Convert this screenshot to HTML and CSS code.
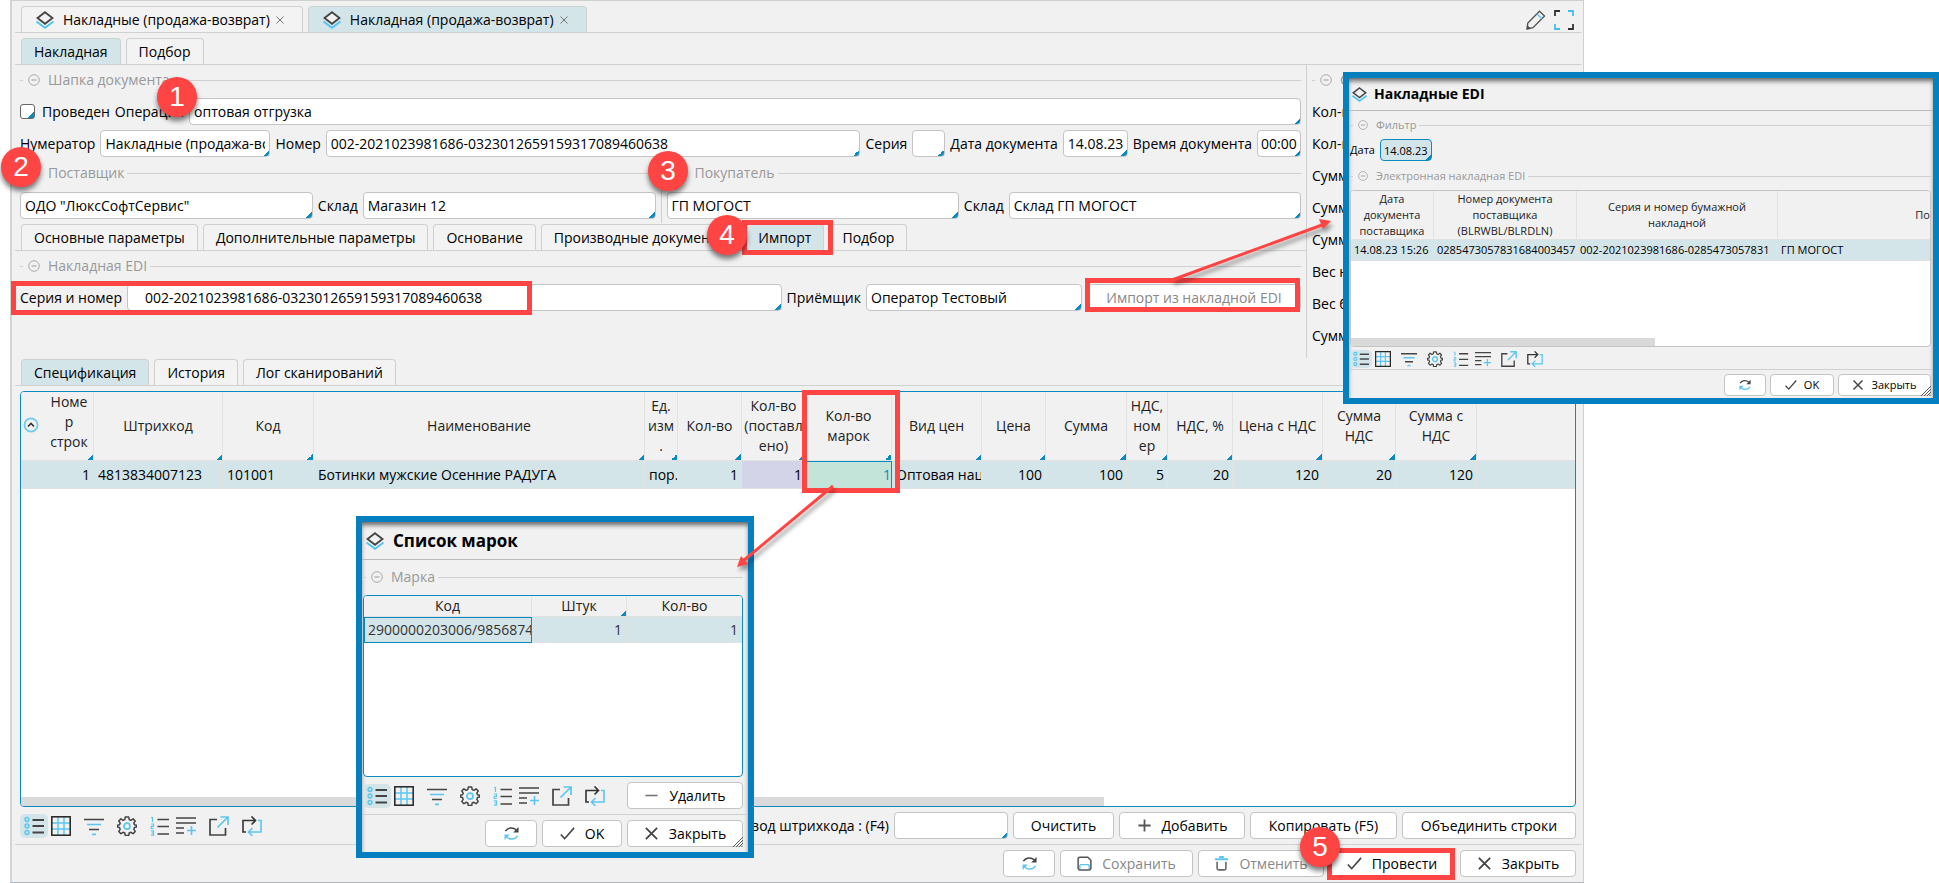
FILE: index.html
```
<!DOCTYPE html>
<html lang="ru">
<head>
<meta charset="utf-8">
<title>Накладная (продажа-возврат)</title>
<link rel="stylesheet" href="styles.css">
</head>
<body>
<svg class="sprite" aria-hidden="true">
  <symbol id="layers" viewBox="0 0 20 18"><path d="M1.5 10.5 10 16.8l8.500-6.300" fill="none" stroke="#55c4ef" stroke-width="2"/><path d="M10 1.200 17.500 7 10 12.800 2.500 7z" fill="#f1f1f1" stroke="#444" stroke-width="1.800"/></symbol>
  <symbol id="list" viewBox="0 0 20 20"><g fill="none" stroke="#5cc6f0" stroke-width="1.500"><circle cx="3" cy="3.500" r="1.900"/><circle cx="3" cy="10" r="1.900"/><circle cx="3" cy="16.500" r="1.900"/></g><path d="M8.500 4H20M8.500 10H20M8.500 16.500H20" stroke="#444" stroke-width="1.800"/></symbol>
  <symbol id="grid" viewBox="0 0 20 20"><path d="M7 1v18M13 1v18M1 7h18M1 13h18" stroke="#5cc6f0" stroke-width="1.500"/><rect x=".8" y=".8" width="18.400" height="18.400" fill="none" stroke="#222" stroke-width="1.500"/></symbol>
  <symbol id="filter" viewBox="0 0 20 20"><path d="M0 3.500h20M5 13.500h10" stroke="#444" stroke-width="1.700"/><path d="M3 8.500h14M8 18.300h4" stroke="#5cc6f0" stroke-width="1.700"/></symbol>
  <symbol id="gear" viewBox="0 0 20 20"><path d="M8.300 1h3.400l.5 2.600 1.700.7 2.200-1.500 2.100 2.200-1.400 2.100.7 1.700 2 .4v1.900l-2 .4-.7 1.900 1.400 2-2.100 2.300-2.200-1.400-1.700.7-.5 2.500H8.300l-.5-2.500-1.700-.7-2.200 1.400-2.100-2.300 1.400-2-.7-1.900-2-.4V9.200l2-.4.7-1.700L1.800 5l2.100-2.200 2.200 1.500 1.700-.7z" fill="none" stroke="#444" stroke-width="1.500" stroke-linejoin="round"/><circle cx="10" cy="10.200" r="3" fill="none" stroke="#5cc6f0" stroke-width="1.700"/></symbol>
  <symbol id="numbered" viewBox="0 0 20 20"><path d="M1 1.500h1.500V6M1 8h2.500v2.300H1.200v2.200h2.500M1 14.800h2.500v4.400H1M1.500 17h2" fill="none" stroke="#5cc6f0" stroke-width="1.200"/><path d="M7.500 3.500H19M7.500 10.500H19M7.500 18H19" stroke="#444" stroke-width="1.700"/></symbol>
  <symbol id="addlist" viewBox="0 0 20 20"><path d="M0 2h20M0 7h20M0 12h8M0 17h8" stroke="#444" stroke-width="1.700"/><path d="M11 14.500h9M15.500 10v9" stroke="#5cc6f0" stroke-width="1.700"/></symbol>
  <symbol id="export" viewBox="0 0 20 20"><path d="M8 3.500H1v15.500h15.500V12" fill="none" stroke="#444" stroke-width="1.700"/><path d="M8.500 11.500 19 1M11.500 1H19v8" fill="none" stroke="#5cc6f0" stroke-width="1.700"/></symbol>
  <symbol id="loop" viewBox="0 0 20 20"><path d="M4 16H1V4.500h12M9.500.5l4 4-4 4" fill="none" stroke="#333" stroke-width="1.600"/><path d="M16 4.500h3V16H7M10.500 12l-4 4 4 4" fill="none" stroke="#5cc6f0" stroke-width="1.600"/></symbol>
  <symbol id="refresh" viewBox="0 0 16 16"><path d="M1.500 5.500C4 1.500 9.500 1 13 4" fill="none" stroke="#444" stroke-width="1.600"/><path d="M15.500 1v6H9.800z" fill="#444"/><path d="M14.500 10.500C12 14.500 6.500 15 3 12" fill="none" stroke="#5cc6f0" stroke-width="1.600"/><path d="M.5 15V9h5.700z" fill="#5cc6f0"/></symbol>
  <symbol id="check" viewBox="0 0 16 16"><path d="M.8 9 5 13.500 15 2" fill="none" stroke="#444" stroke-width="1.700"/></symbol>
  <symbol id="cross" viewBox="0 0 16 16"><path d="M2 2l12 12M14 2 2 14" stroke="#444" stroke-width="1.900"/></symbol>
  <symbol id="thin-cross" viewBox="0 0 10 10"><path d="M1.500 1.500l7 7M8.500 1.500l-7 7" stroke="#777"/></symbol>
  <symbol id="plus" viewBox="0 0 16 16"><path d="M1.500 8h13M8 1.500v13" stroke="#555" stroke-width="1.900"/></symbol>
  <symbol id="minus" viewBox="0 0 16 16"><path d="M1.500 8h13" stroke="#777" stroke-width="1.700"/></symbol>
  <symbol id="save" viewBox="0 0 16 16"><path d="M1.200 3c0-1 .8-1.800 1.800-1.800h8.500l3.300 3.300V13c0 1-.8 1.800-1.800 1.800H3c-1 0-1.800-.8-1.800-1.800z" fill="none" stroke="#555" stroke-width="1.600"/><path d="M3 9.200h10M3 13.800V9.500M13 13.800V9.500" stroke="#5cc6f0" stroke-width="1.500"/></symbol>
  <symbol id="trash" viewBox="0 0 16 16"><path d="M1 3.500h14M5.500 1h5" stroke="#5cc6f0" stroke-width="2.200"/><path d="M3.300 6v7c0 1 .7 1.800 1.700 1.800h6c1 0 1.700-.8 1.700-1.800V6" fill="none" stroke="#666" stroke-width="1.700"/></symbol>
  <symbol id="pencil" viewBox="0 0 20 20"><path d="M1 19l.8-6L13.500 1.300l5 4.700L7 17.700z" fill="none" stroke="#555" stroke-width="1.400"/><path d="M11 4l5 4.700" stroke="#5cc6f0" stroke-width="1.500"/><path d="M1 19l.6-3.500 3 2.800z" fill="#444"/></symbol>
  <symbol id="expand" viewBox="0 0 20 20"><path d="M1 6V1h5M19 14v5h-5" fill="none" stroke="#333" stroke-width="1.800"/><path d="M14 1h5v5M6 19H1v-5" fill="none" stroke="#45bdec" stroke-width="1.800"/></symbol>
  <symbol id="collapse" viewBox="0 0 12 12"><circle cx="6" cy="6" r="5.300" fill="none" stroke="#aaa"/><path d="M3.500 6h5" stroke="#999"/></symbol>
  <symbol id="up" viewBox="0 0 16 16"><circle cx="8" cy="8" r="6.600" fill="#f1f1f1" stroke="#6fcaf0" stroke-width="1.700"/><path d="M5 9.500 8 6.500l3 3" fill="none" stroke="#333" stroke-width="1.600"/></symbol>
  <symbol id="grip" viewBox="0 0 10 10"><path d="M0 10 10 0M3 10l7-7M6 10l4-4M8.500 10 10 8.500" stroke="#555"/></symbol>
</svg>

<main class="window">
  <nav class="tabs tabs-docs">
    <button class="tab"><svg class="ic-layers"><use href="#layers"/></svg>Накладные (продажа-возврат)<svg class="close"><use href="#thin-cross"/></svg></button>
    <button class="tab active"><svg class="ic-layers"><use href="#layers"/></svg>Накладная (продажа-возврат)<svg class="close"><use href="#thin-cross"/></svg></button>
    <div class="window-tools"><svg class="ic20"><use href="#pencil"/></svg><svg class="ic20"><use href="#expand"/></svg></div>
  </nav>
  <nav class="tabs">
    <button class="tab active">Накладная</button>
    <button class="tab">Подбор</button>
  </nav>

  <section class="header">
    <div class="header-main">
      <div class="legend"><svg><use href="#collapse"/></svg>Шапка документа</div>
      <div class="row inset">
        <label class="check"><input type="checkbox">Проведен</label>
        <label for="operation">Операция</label><input id="operation" class="grow" value="оптовая отгрузка">
      </div>
      <div class="row inset">
        <label for="numerator">Нумератор</label><input id="numerator" class="w-num" value="Накладные (продажа-возврат)">
        <label for="number">Номер</label><input id="number" class="grow" value="002-2021023981686-0323012659159317089460638">
        <label for="series">Серия</label><input id="series" class="w-ser">
        <label for="date">Дата документа</label><input id="date" class="w-date" value="14.08.23">
        <label for="time">Время документа</label><input id="time" class="w-time" value="00:00">
      </div>
      <div class="parties inset">
        <div class="party">
          <div class="legend spaced"><svg><use href="#collapse"/></svg>Поставщик</div>
          <div class="row"><input class="grow" aria-label="Поставщик" value="ОДО &quot;ЛюксСофтСервис&quot;"><label for="stock1">Склад</label><input id="stock1" class="grow" value="Магазин 12"></div>
        </div>
        <div class="party">
          <div class="legend spaced"><svg><use href="#collapse"/></svg>Покупатель</div>
          <div class="row"><input class="grow" aria-label="Покупатель" value="ГП МОГОСТ"><label for="stock2">Склад</label><input id="stock2" class="grow" value="Склад ГП МОГОСТ"></div>
        </div>
      </div>
      <nav class="tabs tabs-inner">
        <button class="tab">Основные параметры</button>
        <button class="tab">Дополнительные параметры</button>
        <button class="tab">Основание</button>
        <button class="tab">Производные документы</button>
        <button class="tab active">Импорт</button>
        <button class="tab">Подбор</button>
      </nav>
      <div class="legend"><svg><use href="#collapse"/></svg>Накладная EDI</div>
      <div class="row inset">
        <label for="edi">Серия и номер</label><input id="edi" class="grow indented" value="002-2021023981686-0323012659159317089460638">
        <label for="receiver">Приёмщик</label><input id="receiver" class="w-recv" value="Оператор Тестовый">
        <button class="btn muted w-import">Импорт из накладной EDI</button>
      </div>
    </div>
    <aside class="totals">
      <div class="legend"><svg><use href="#collapse"/></svg>Сумма</div>
      <div>Кол-во</div><div>Кол-во</div><div>Сумма</div><div>Сумма</div><div>Сумма</div><div>Вес нетто</div><div>Вес брутто</div><div>Сумма</div>
    </aside>
  </section>

  <nav class="tabs tabs-spec">
    <button class="tab active">Спецификация</button>
    <button class="tab">История</button>
    <button class="tab">Лог сканирований</button>
  </nav>
  <div class="grid-box">
    <table class="grid spec">
      <colgroup><col class="c73"><col class="c129"><col class="c91"><col class="c331"><col class="c33"><col class="c64"><col class="c64"><col class="c86"><col class="c90"><col class="c64"><col class="c81"><col class="c41"><col class="c65"><col class="c90"><col class="c73"><col class="c81"><col></colgroup>
      <thead><tr>
        <th class="first"><div class="sorted"><svg class="ic16"><use href="#up"/></svg><span>Номе<br>р<br>строк</span></div></th><th>Штрихкод</th><th>Код</th><th>Наименование</th><th>Ед.<br>изм<br>.</th><th>Кол-во</th><th>Кол-во<br>(поставл<br>ено)</th><th>Кол-во<br>марок</th><th>Вид цен</th><th>Цена</th><th>Сумма</th><th>НДС,<br>ном<br>ер</th><th>НДС, %</th><th>Цена с НДС</th><th>Сумма<br>НДС</th><th>Сумма с<br>НДС</th><th class="blank"></th>
      </tr></thead>
      <tbody><tr>
        <td class="num">1</td><td>4813834007123</td><td>101001</td><td>Ботинки мужские Осенние РАДУГА</td><td>пор.</td><td class="num">1</td><td class="num lilac">1</td><td class="num focus">1</td><td>Оптовая нац</td><td class="num">100</td><td class="num">100</td><td class="num">5</td><td class="num">20</td><td class="num">120</td><td class="num">20</td><td class="num">120</td><td></td>
      </tr></tbody>
    </table>
    <div class="scroll"></div>
  </div>
  <div class="bar">
    <div class="icons"><span class="on"><svg><use href="#list"/></svg></span><svg><use href="#grid"/></svg><svg class="far"><use href="#filter"/></svg><svg class="far"><use href="#gear"/></svg><svg class="far"><use href="#numbered"/></svg><svg class="near"><use href="#addlist"/></svg><svg class="far"><use href="#export"/></svg><svg class="far"><use href="#loop"/></svg></div>
    <label for="barcode">Ввод штрихкода : (F4)</label><input id="barcode" class="w-bar">
    <button class="btn w-clear">Очистить</button>
    <button class="btn w-add"><svg><use href="#plus"/></svg>Добавить</button>
    <button class="btn w-copy">Копировать (F5)</button>
    <button class="btn w-merge">Объединить строки</button>
  </div>
  <footer class="bar foot">
    <button class="btn w-ref" aria-label="Обновить"><svg><use href="#refresh"/></svg></button>
    <button class="btn muted w-save"><svg><use href="#save"/></svg>Сохранить</button>
    <button class="btn muted w-add"><svg><use href="#trash"/></svg>Отменить</button>
    <button class="btn w-add"><svg><use href="#check"/></svg>Провести</button>
    <button class="btn w-close"><svg><use href="#cross"/></svg>Закрыть</button>
  </footer>
</main>

<section class="dialog marks">
  <h2><svg class="ic-layers"><use href="#layers"/></svg>Список марок</h2>
  <div class="dialog-body">
    <div class="legend"><svg><use href="#collapse"/></svg>Марка</div>
    <div class="grid-box">
      <table class="grid">
        <colgroup><col class="c168"><col class="c95"><col></colgroup>
        <thead><tr><th class="plain">Код</th><th>Штук</th><th class="plain">Кол-во</th></tr></thead>
        <tbody><tr><td class="outlined">2900000203006/9856874</td><td class="num">1</td><td class="num">1</td></tr></tbody>
      </table>
    </div>
    <div class="bar">
      <div class="icons"><span class="on"><svg><use href="#list"/></svg></span><svg><use href="#grid"/></svg><svg class="far"><use href="#filter"/></svg><svg class="far"><use href="#gear"/></svg><svg class="far"><use href="#numbered"/></svg><svg class="near"><use href="#addlist"/></svg><svg class="far"><use href="#export"/></svg><svg class="far"><use href="#loop"/></svg></div>
      <button class="btn w-close"><svg><use href="#minus"/></svg>Удалить</button>
    </div>
  </div>
  <footer class="bar foot">
    <button class="btn w-ref" aria-label="Обновить"><svg><use href="#refresh"/></svg></button>
    <button class="btn w-ok"><svg><use href="#check"/></svg>OK</button>
    <button class="btn w-close"><svg><use href="#cross"/></svg>Закрыть</button>
  </footer>
  <svg class="grip"><use href="#grip"/></svg>
</section>

<section class="dialog edi">
  <h2><svg class="ic-layers"><use href="#layers"/></svg>Накладные EDI</h2>
  <div class="dialog-body">
    <div class="legend"><svg><use href="#collapse"/></svg>Фильтр</div>
    <div class="row"><label for="fdate">Дата</label><input id="fdate" class="w-fdate" value="14.08.23"></div>
    <div class="legend"><svg><use href="#collapse"/></svg>Электронная накладная EDI</div>
    <div class="grid-box">
      <table class="grid">
        <colgroup><col class="c83"><col class="c143"><col class="c201"><col></colgroup>
        <thead><tr><th class="plain">Дата<br>документа<br>поставщика</th><th class="plain">Номер документа<br>поставщика<br>(BLRWBL/BLRDLN)</th><th class="plain">Серия и номер бумажной<br>накладной</th><th class="plain cut">По</th></tr></thead>
        <tbody><tr><td>14.08.23 15:26</td><td>0285473057831684003457</td><td>002-2021023981686-0285473057831</td><td>ГП МОГОСТ</td></tr></tbody>
      </table>
      <div class="scroll"></div>
    </div>
    <div class="bar">
      <div class="icons"><span class="on"><svg><use href="#list"/></svg></span><svg><use href="#grid"/></svg><svg class="far"><use href="#filter"/></svg><svg class="far"><use href="#gear"/></svg><svg class="far"><use href="#numbered"/></svg><svg class="near"><use href="#addlist"/></svg><svg class="far"><use href="#export"/></svg><svg class="far"><use href="#loop"/></svg></div>
    </div>
  </div>
  <footer class="bar foot">
    <button class="btn w-ref" aria-label="Обновить"><svg><use href="#refresh"/></svg></button>
    <button class="btn w-ok"><svg><use href="#check"/></svg>OK</button>
    <button class="btn w-close"><svg><use href="#cross"/></svg>Закрыть</button>
  </footer>
  <svg class="grip"><use href="#grip"/></svg>
</section>

<div class="frame frame-series"></div>
<div class="frame frame-tab"></div>
<div class="frame frame-import"></div>
<div class="frame frame-marks"></div>
<div class="frame frame-post"></div>
<svg class="arrows" aria-hidden="true">
  <path class="shaft" d="M1172 280 1322 225"/><path class="head" d="M1331 221l-8 8-4-10z"/>
  <path class="shaft" d="M833 486 743 561"/><path class="head" d="M737 567l4-11 7 8z"/>
</svg>
<div class="badge b1">1</div>
<div class="badge b2">2</div>
<div class="badge b3">3</div>
<div class="badge b4">4</div>
<div class="badge b5">5</div>
</body>
</html>
```
FILE: styles.css
```
* { box-sizing: border-box; }
body {
  margin: 0;
  position: relative;
  min-height: 100vh;
  background: #fff;
  color: #000;
  font: 14px/20px "Open Sans", "Noto Sans", sans-serif;
}
button, input { font: inherit; color: inherit; }
svg { display: block; flex: none; }
.sprite { position: absolute; width: 0; height: 0; }
.ic-layers { width: 20px; height: 18px; }
.ic20 { width: 20px; height: 20px; }
.ic16 { width: 16px; height: 16px; }

.window {
  display: flex;
  flex-direction: column;
  min-height: 100vh;
  margin: 0 355px 0 10px;
  padding: 0 2px 0 3px;
  background: #f1f1f1;
  border: 1px solid #d0d0d0;
  border-left: 2px solid #d4d4d4;
  border-bottom-color: #aeb6be;
}

.tabs {
  display: flex;
  gap: 5px;
  padding: 5px 6px 0;
  border-bottom: 1px solid #d0d0d0;
}
.tab {
  display: flex;
  align-items: center;
  height: 26px;
  padding: 0 12px;
  border: 1px solid #d0d0d0;
  border-bottom: 0;
  border-radius: 4px 4px 0 0;
  background: #f3f3f3;
  white-space: nowrap;
}
.tab.active { background: #d3e5e9; }
.tabs-docs .tab { padding: 0 17px 0 13px; }
.tabs-docs .ic-layers { margin-right: 8px; }
.close { width: 10px; height: 10px; margin-left: 5px; }
.window-tools { display: flex; gap: 8px; margin: 4px 1px 0 auto; }

.header { display: grid; grid-template-columns: 1fr 274px; min-height: 293px; }
.header-main { border-right: 1px solid #d0d0d0; }
.inset { padding: 0 5px; }
.legend {
  display: flex;
  align-items: center;
  gap: 8px;
  height: 30px;
  margin: 0 5px 3px;
  color: #999;
  white-space: nowrap;
}
.legend svg { width: 12px; height: 12px; }
.legend::before { content: ""; width: 3px; height: 1px; margin-right: -3px; background: #d0d0d0; }
.legend::after { content: ""; flex: 1; height: 1px; margin-left: -5px; background: #d0d0d0; }
.legend.spaced { margin: -4px 0 4px; }

.row { display: flex; align-items: center; gap: 5px; margin-bottom: 5px; white-space: nowrap; }
.check { display: flex; align-items: center; gap: 7px; }
.check input {
  appearance: none;
  width: 15px;
  height: 15px;
  margin: 0;
  padding: 0;
  border: 1px solid #666;
  border-radius: 3px;
}
input {
  min-width: 0;
  height: 27px;
  padding: 0 4px;
  border: 1px solid #c4c4c4;
  border-radius: 4px;
  background: linear-gradient(135deg, transparent 50%, #0a8abf 50%) right bottom / 6px 6px no-repeat #fff;
}
.grow { flex: 1 1 0; }
.indented { padding-left: 17px; }
.w-num { width: 170px; }
.w-ser { width: 33px; }
.w-date { width: 65px; }
.w-time { width: 44px; padding: 0 3px; }
.w-recv { width: 216px; }
.w-bar { width: 114px; }
.parties { display: grid; grid-template-columns: 1fr 1fr; }
.party + .party { border-left: 1px solid #d0d0d0; padding-left: 5px; }
.party:first-child { padding-right: 5px; }
.party .row { margin-bottom: 4px; }
.tabs-inner { padding-top: 1px; }
.totals { padding-left: 5px; white-space: nowrap; overflow: hidden; }
.totals .legend { margin: 0 0 1px; }
.totals > div:not(.legend) { height: 32px; line-height: 32px; }
.tabs-spec { padding-top: 1px; }

.btn {
  display: flex;
  align-items: center;
  justify-content: center;
  gap: 10px;
  height: 27px;
  padding: 0;
  border: 1px solid #c4c4c4;
  border-radius: 4px;
  background: #fff;
  white-space: nowrap;
}
.btn svg { width: 15px; height: 15px; }
.btn.muted { color: #888; }
.w-import { width: 214px; }
.w-clear { width: 101px; }
.w-add { width: 126px; }
.w-copy { width: 147px; }
.w-merge { width: 174px; }
.w-ref { width: 52px; }
.w-save { width: 133px; }
.w-ok { width: 80px; }
.w-close { width: 116px; }

.grid-box {
  flex: 1;
  display: flex;
  flex-direction: column;
  justify-content: space-between;
  margin: 5px 5px 0;
  border: 1px solid #0a8abf;
  border-radius: 4px;
  background: #fff;
  overflow: hidden;
}
.grid { width: 100%; border-collapse: separate; border-spacing: 0; table-layout: fixed; }
.grid th, .grid td {
  overflow: hidden;
  white-space: nowrap;
  font-weight: normal;
  border-right: 1px solid #e2e2e2;
  border-bottom: 1px solid #e2e2e2;
}
.grid th:last-child, .grid td:last-child { border-right: 0; }
.grid th {
  height: 69px;
  padding: 0;
  color: #222;
  background: linear-gradient(135deg, transparent 50%, #0a8abf 50%) right bottom / 6px 6px no-repeat #f1f1f1;
}
.grid th.plain, .grid th.blank { background: #f1f1f1; }
.grid th.first { padding-bottom: 8px; }
.sorted { display: flex; align-items: center; gap: 6px; padding-left: 2px; }
.sorted svg { margin-top: 5px; }
.sorted span { flex: 1; }
.grid td { height: 28px; padding: 0 3px 0 4px; background: #d3e5e9; }
.grid .num { text-align: right; }
.spec .lilac { background: #d3d4e8; }
.spec .focus { background: #c3e5d9; color: #0a8abf; border: 1px solid #0a8abf; padding-right: 0; }
.scroll { width: 1083px; height: 9px; background: #dadada; }
.c33 { width: 33px; } .c41 { width: 41px; } .c64 { width: 64px; } .c65 { width: 65px; }
.c73 { width: 73px; } .c81 { width: 81px; } .c83 { width: 83px; } .c86 { width: 86px; }
.c90 { width: 90px; } .c91 { width: 91px; } .c95 { width: 95px; } .c129 { width: 129px; }
.c143 { width: 143px; } .c168 { width: 168px; } .c201 { width: 201px; } .c331 { width: 331px; }

.bar { display: flex; align-items: center; justify-content: flex-end; gap: 5px; padding: 5px; white-space: nowrap; }
.foot { border-top: 1px solid #d0d0d0; }
.icons { display: flex; align-items: center; gap: 3px; margin-right: auto; }
.icons svg { width: 20px; height: 20px; }
.icons .on { padding: 2px 4px; border-radius: 5px; background: #d3e5e9; }
.icons .far { margin-left: 10px; }
.icons .near { margin-left: 3px; }

.dialog {
  position: absolute;
  display: flex;
  flex-direction: column;
  border: 6px solid #0380bd;
  background: #f1f1f1;
  box-shadow: inset 0 4px 5px -1px #666;
}
.dialog h2 {
  display: flex;
  align-items: center;
  gap: 8px;
  height: 38px;
  margin: 0;
  padding-left: 3px;
  border-bottom: 1px solid #bbb;
  font-size: 17px;
}
.dialog-body { flex: 1; display: flex; flex-direction: column; }
.dialog .legend { margin: 2px 5px 3px 1px; }
.dialog .grid-box { margin: 0 5px 0 1px; }
.dialog .bar { padding: 5px 5px 5px 1px; }
.dialog .grip { position: absolute; right: 5px; bottom: 5px; width: 10px; height: 10px; }
.marks { left: 356px; top: 516px; width: 398px; height: 342px; }
.marks .grid th { height: 21px; }
.marks .grid td { height: 26px; color: #333; }
.marks .icons .on { padding: 2px 4px; }
.marks .grid .num { padding-right: 4px; }
.marks .grid .outlined { border: 1px solid #0a8abf; padding-left: 3px; }

.edi { right: 0; top: 72px; width: 596px; height: 332px; font-size: 11px; line-height: 16px; }
.edi h2 { height: 33px; gap: 6px; padding-left: 2px; font-size: 14px; }
.edi .ic-layers { width: 17px; height: 15px; }
.edi .legend { height: 26px; margin: 1px 2px 1px 1px; }
.edi .legend svg { width: 10px; height: 10px; }
.edi .row { margin-bottom: 1px; gap: 5px; padding-left: 1px; }
.edi .w-fdate { width: 52px; height: 22px; padding: 0 3px; border-color: #0a8abf; background-color: #d3e5e9; }
.edi .grid-box { margin: 0 2px 0 1px; border-color: #c4c4c4; }
.edi .grid th { height: 48px; }
.edi .grid th.cut { text-align: right; }
.edi .grid td { height: 21px; padding: 0 0 0 3px; }
.edi .scroll { width: 304px; height: 8px; }
.edi .bar { padding: 3px 2px 1px 1px; gap: 4px; }
.edi .foot { padding: 4px 2px 2px; }
.edi .icons svg { width: 16px; height: 16px; }
.edi .icons .on { padding: 1px 3px; }
.edi .icons .far { margin-left: 7px; }
.edi .btn { height: 22px; gap: 7px; }
.edi .btn svg { width: 12px; height: 12px; }
.edi .w-ref { width: 42px; }
.edi .w-ok { width: 64px; }
.edi .w-close { width: 93px; }
.edi .grip { right: 2px; bottom: 2px; }

.frame { position: absolute; border: 5px solid #ff4444; pointer-events: none; }
.frame-series { left: 11px; top: 281px; width: 521px; height: 34px; }
.frame-tab { left: 742px; top: 220px; width: 91px; height: 35px; }
.frame-import { left: 1085px; top: 278px; width: 215px; height: 34px; }
.frame-marks { left: 802px; top: 390px; width: 98px; height: 103px; }
.frame-post { left: 1327px; top: 848px; width: 128px; height: 32px; }
.arrows {
  position: absolute;
  inset: 0;
  width: 100%;
  height: 100%;
  pointer-events: none;
  filter: drop-shadow(2px 4px 2px rgba(0, 0, 0, .4));
}
.shaft { fill: none; stroke: #ff4444; stroke-width: 3; }
.head { fill: #ff4444; }
.badge {
  position: absolute;
  width: 40px;
  height: 40px;
  border-radius: 50%;
  background: #ff4444;
  box-shadow: 0 4px 5px rgba(0, 0, 0, .5);
  color: #fff;
  font: 28px/40px "Liberation Sans", Arial, sans-serif;
  text-align: center;
}
.b1 { left: 157px; top: 77px; }
.b2 { left: 1px; top: 147px; }
.b3 { left: 648px; top: 151px; }
.b4 { left: 707px; top: 215px; }
.b5 { left: 1300px; top: 827px; }
```
